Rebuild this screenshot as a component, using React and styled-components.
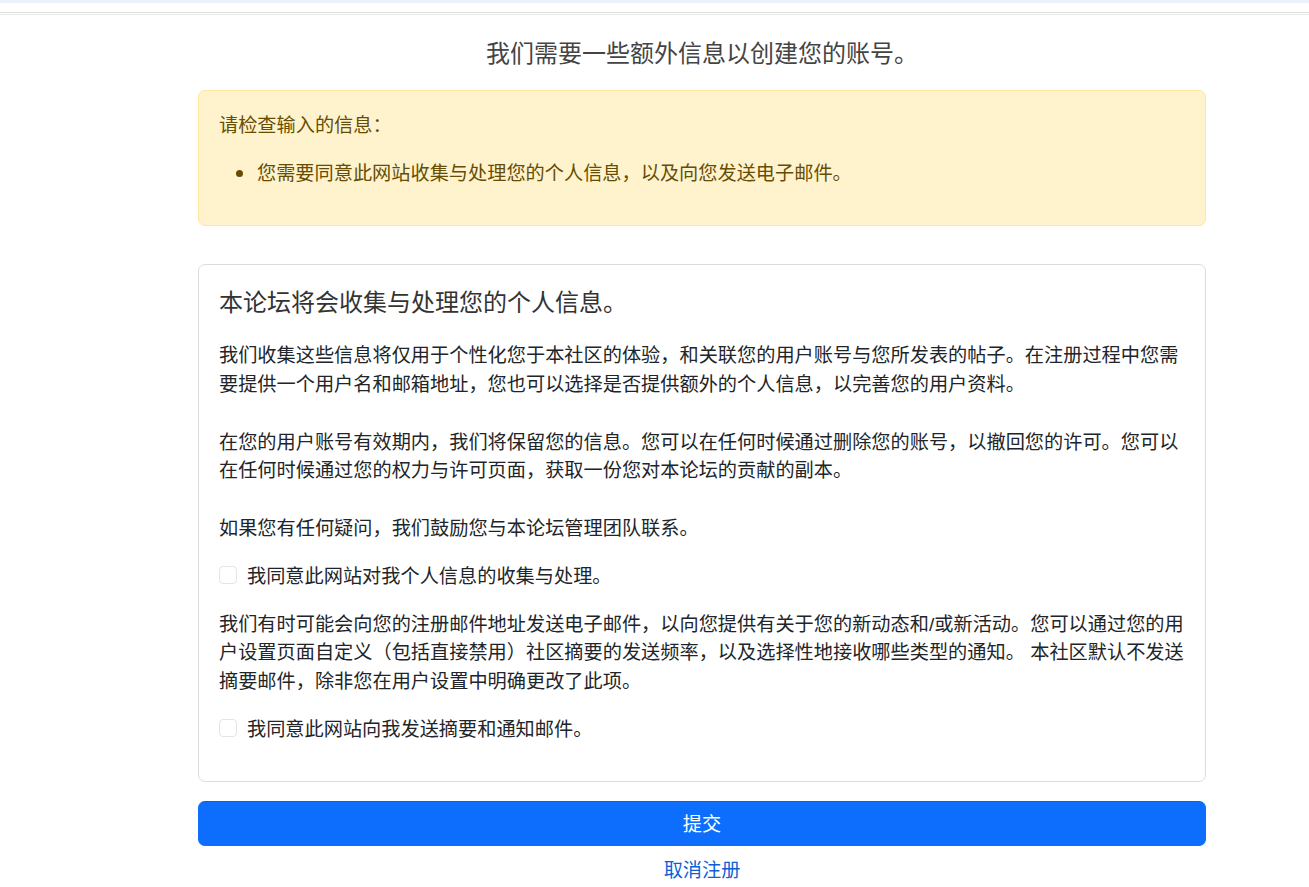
import React from "react";
import styled, { createGlobalStyle } from "styled-components";

const Global = createGlobalStyle`
  html, body { margin: 0; padding: 0; background: #fff; }
  body {
    font-family: "Noto Sans CJK SC", "Liberation Sans", sans-serif;
    font-size: 19.2px;
    line-height: 28.8px;
    color: #212529;
  }
  * { box-sizing: border-box; }
`;

const TopStrip = styled.div`
  height: 3px;
  background: #ebf1fa;
`;

const HeaderRule = styled.div`
  margin-top: 9px;
  height: 3px;
  border-top: 1px solid #dcdfda;
  border-bottom: 1px solid #e6e8ea;
`;

const Container = styled.main`
  width: 1008px;
  margin: 0 103px 0 198px;
  padding-top: 23px;
`;

const Heading = styled.h1`
  margin: 0 0 23px;
  font-size: 24px;
  line-height: 28.8px;
  font-weight: 400;
  text-align: center;
  color: #444;
`;

const Alert = styled.div`
  background: #fff3cd;
  border: 1px solid #ffe69c;
  border-radius: 7px;
  color: #664d03;
  padding: 19px 20px 20px 20px;
`;

const AlertText = styled.p`
  margin: 0 0 19px;
`;

const AlertList = styled.ul`
  margin: 0 0 19px;
  padding-left: 38px;
`;

const Card = styled.section`
  margin-top: 38px;
  border: 1px solid #dadde0;
  border-radius: 7px;
  padding: 22px 20px 19px;
`;

const CardTitle = styled.h2`
  margin: 0 0 24px;
  font-size: 24px;
  line-height: 28.8px;
  font-weight: 400;
  color: #333;
`;

const Para = styled.p`
  margin: 0 0 19px;
  white-space: pre-line;
`;

const Latin = styled.span`
  font-family: "Liberation Sans", sans-serif;
  line-height: 0;
`;

const Check = styled.label`
  display: flex;
  align-items: center;
  gap: 10px;
  margin-bottom: 19px;
  cursor: pointer;
`;

const Box = styled.input.attrs({ type: "checkbox" })`
  appearance: none;
  margin: 0;
  width: 18px;
  height: 18px;
  border: 1px solid #e3e5e8;
  border-radius: 4px;
  background: #fff;
  flex: none;
`;

const Submit = styled.button`
  display: block;
  width: 100%;
  margin-top: 19px;
  height: 45px;
  border: 1px solid #0d6efd;
  border-top-color: #0b62e0;
  border-radius: 7px;
  background: #0d6efd;
  color: #fff;
  font: inherit;
  font-size: 19.2px;
`;

const CancelRow = styled.div`
  text-align: center;
  margin-top: 9px;
`;

const CancelLink = styled.a`
  color: #0d5fd8;
  text-decoration: none;
`;

export default function App() {
  return (
    <>
      <Global />
      <TopStrip />
      <HeaderRule />
      <Container>
        <Heading>我们需要一些额外信息以创建您的账号。</Heading>
        <Alert>
          <AlertText>请检查输入的信息：</AlertText>
          <AlertList>
            <li>您需要同意此网站收集与处理您的个人信息，以及向您发送电子邮件。</li>
          </AlertList>
        </Alert>
        <Card>
          <CardTitle>本论坛将会收集与处理您的个人信息。</CardTitle>
          <Para>
            {"我们收集这些信息将仅用于个性化您于本社区的体验，和关联您的用户账号与您所发表的帖子。在注册过程中您需要提供一个用户名和邮箱地址，您也可以选择是否提供额外的个人信息，以完善您的用户资料。\n\n在您的用户账号有效期内，我们将保留您的信息。您可以在任何时候通过删除您的账号，以撤回您的许可。您可以在任何时候通过您的权力与许可页面，获取一份您对本论坛的贡献的副本。\n\n如果您有任何疑问，我们鼓励您与本论坛管理团队联系。"}
          </Para>
          <Check>
            <Box />
            我同意此网站对我个人信息的收集与处理。
          </Check>
          <Para>
            我们有时可能会向您的注册邮件地址发送电子邮件，以向您提供有关于您的新动态和<Latin>/</Latin>或新活动。您可以通过您的用户设置页面自定义（包括直接禁用）社区摘要的发送频率，以及选择性地接收哪些类型的通知。<Latin> </Latin>本社区默认不发送摘要邮件，除非您在用户设置中明确更改了此项。
          </Para>
          <Check>
            <Box />
            我同意此网站向我发送摘要和通知邮件。
          </Check>
        </Card>
        <Submit type="button">提交</Submit>
        <CancelRow>
          <CancelLink href="#">取消注册</CancelLink>
        </CancelRow>
      </Container>
    </>
  );
}
